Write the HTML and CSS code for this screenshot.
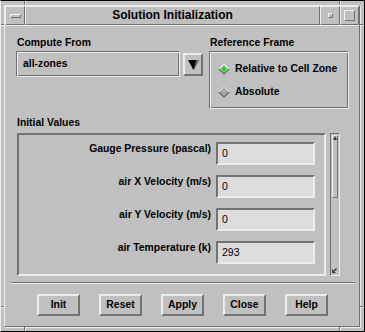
FILE: index.html
```html
<!DOCTYPE html>
<html>
<head>
<meta charset="utf-8">
<title>Solution Initialization</title>
<link rel="stylesheet" href="styles.css">
</head>
<body>
<div class="window">
  <div class="frame">
    <div class="titlebar">
      <div class="tb menu"><span class="menu-glyph"></span></div>
      <div class="tb tb-title">Solution Initialization</div>
      <div class="tb min"><span class="min-glyph"></span></div>
      <div class="tb max"><span class="max-glyph"></span></div>
    </div>
    <div class="client">
      <div class="top-row">
        <div class="col-left">
          <div class="label">Compute From</div>
          <div class="option-row">
            <div class="option-field">all-zones</div>
            <div class="drop-btn">
              <svg width="11" height="10" viewBox="0 0 11 10">
                <polygon points="0,0 11,0 5.5,10" fill="#000"/>
                <polygon points="8,0 11,0 6,9" fill="#6a6a6a"/>
              </svg>
            </div>
          </div>
        </div>
        <div class="col-right">
          <div class="label">Reference Frame</div>
          <div class="radio-box">
            <div class="radio">
              <svg width="12" height="12" viewBox="0 0 12 12">
                <polygon points="6,0 12,6 6,12 0,6" fill="#6e6e6e"/>
                <polygon points="0,6 6,0 12,6 10,6 6,2 2,6" fill="#f4f4f4"/>
                <polygon points="6,2 10,6 6,10 2,6" fill="#c0c0c0"/>
                <polygon points="6,3.3 8.7,6 6,8.7 3.3,6" fill="#00e600"/>
              </svg>
              <span>Relative to Cell Zone</span>
            </div>
            <div class="radio">
              <svg width="12" height="12" viewBox="0 0 12 12">
                <polygon points="6,0 12,6 6,12 0,6" fill="#6e6e6e"/>
                <polygon points="0,6 6,0 12,6 10,6 6,2 2,6" fill="#e4e4e4"/>
                <polygon points="6,2 10,6 6,10 2,6" fill="#a8a8a8"/>
              </svg>
              <span>Absolute</span>
            </div>
          </div>
        </div>
      </div>
      <div class="label iv-label">Initial Values</div>
      <div class="values-row">
        <div class="values-panel">
          <div class="row-label">Gauge Pressure (pascal)</div>
          <div class="entry">0</div>
          <div class="row-label">air X Velocity (m/s)</div>
          <div class="entry">0</div>
          <div class="row-label">air Y Velocity (m/s)</div>
          <div class="entry">0</div>
          <div class="row-label">air Temperature (k)</div>
          <div class="entry">293</div>
        </div>
        <div class="scrollbar">
          <div class="thumb">
            <svg width="4" height="4" viewBox="0 0 4 4"><polygon points="2,0 4,4 0,4" fill="#333"/></svg>
          </div>
          <svg class="grip" width="5" height="5" viewBox="0 0 5 5"><polyline points="0.5,4.5 4.5,0.5" stroke="#333" stroke-width="1.2" fill="none"/><polyline points="0.5,1.5 0.5,4.5 3.5,4.5" stroke="#333" stroke-width="1" fill="none"/></svg>
        </div>
      </div>
      <div class="separator"></div>
      <div class="buttons">
        <div class="btn">Init</div>
        <div class="btn">Reset</div>
        <div class="btn">Apply</div>
        <div class="btn">Close</div>
        <div class="btn">Help</div>
      </div>
    </div>
  </div>
  <span class="tick v tick-tl"></span>
  <span class="tick v tick-tr"></span>
  <span class="tick h tick-lt"></span>
  <span class="tick h tick-rt"></span>
  <span class="tick h tick-lb"></span>
  <span class="tick h tick-rb"></span>
  <span class="tick v tick-bl"></span>
  <span class="tick v tick-br"></span>
</div>
</body>
</html>
```
FILE: styles.css
```css
* { box-sizing: border-box; }
html, body { margin: 0; padding: 0; background: #c0c0c0; }
body { font-family: "Liberation Sans", Arial, sans-serif; color: #000; }

.window {
  position: relative;
  width: 365px;
  height: 332px;
  background: #c0c0c0;
  border-top: 1px solid #000;
  border-right: 1px solid #000;
  border-bottom: 1px solid #000;
  border-left: 1px solid #ececec;
  padding: 4px 4px 4px 3px;
}

.frame {
  height: 100%;
  display: flex;
  flex-direction: column;
  border: 1px solid;
  border-color: #ececec #727272 #727272 #ececec;
  box-shadow: 1px 1px 0 #ececec;
}

.titlebar { height: 19px; display: flex; }
.tb {
  border: 1px solid;
  border-color: #ececec #727272 #727272 #ececec;
  display: flex;
  align-items: center;
  justify-content: center;
}
.menu { width: 20px; }
.tb-title { flex: 1; font-size: 12px; font-weight: bold; line-height: 17px; white-space: nowrap; }
.min { width: 20px; }
.max { width: 19px; }

.menu-glyph {
  width: 11px; height: 4px;
  border: 1px solid;
  border-color: #f4f4f4 #727272 #727272 #f4f4f4;
}
.min-glyph {
  width: 5px; height: 5px;
  border: 1px solid;
  border-color: #f4f4f4 #727272 #727272 #f4f4f4;
}
.max-glyph {
  width: 11px; height: 11px;
  border: 1px solid;
  border-color: #f4f4f4 #727272 #727272 #f4f4f4;
}

.client {
  flex: 1;
  border-top: 1px solid #ececec;
  padding: 10px 10px 0 11px;
  display: flex;
  flex-direction: column;
}

.label {
  font-size: 10.4px;
  font-weight: bold;
  line-height: 13px;
  height: 13px;
  padding-left: 1px;
  white-space: nowrap;
}

.top-row { display: flex; gap: 6px; align-items: flex-start; }
.col-left { width: 187px; }
.col-right { width: 141px; }

.option-row { display: flex; align-items: flex-start; margin-top: 2px; }
.option-field {
  width: 164px;
  height: 26px;
  border: 1px solid;
  border-color: #727272 #ececec #ececec #727272;
  box-shadow: inset 1px 1px 0 #ececec, inset -1px -1px 0 #727272;
  padding-left: 6px;
  font-size: 10.4px;
  font-weight: bold;
  line-height: 24px;
}
.drop-btn {
  width: 20px;
  height: 23px;
  margin-left: 3px;
  margin-top: 2px;
  border: 2px solid;
  border-color: #ececec #727272 #727272 #ececec;
  display: flex;
  justify-content: center;
  align-items: flex-start;
  padding-top: 5px;
}
.drop-btn svg { display: block; }

.radio-box {
  margin-top: 2px;
  height: 58px;
  border: 1px solid;
  border-color: #727272 #ececec #ececec #727272;
  box-shadow: inset 1px 1px 0 #ececec, inset -1px -1px 0 #727272;
  padding: 9px 0 0 8px;
  display: flex;
  flex-direction: column;
  gap: 7px;
}
.radio {
  height: 16px;
  display: flex;
  align-items: center;
  gap: 5px;
  font-size: 10.4px;
  font-weight: bold;
  line-height: 16px;
  white-space: nowrap;
}
.radio svg { display: block; flex: none; }

.iv-label { margin-top: 7px; }

.values-row { display: flex; margin-top: 4px; height: 143px; padding-left: 1px; }
.values-panel {
  width: 309px;
  height: 143px;
  border: 2px solid;
  border-color: #727272 #ececec #ececec #727272;
  padding: 7px 9px 0 0;
  display: grid;
  grid-template-columns: 1fr 99px;
  column-gap: 5px;
  row-gap: 10px;
  align-content: start;
  align-items: start;
}
.row-label {
  text-align: right;
  font-size: 10.4px;
  font-weight: bold;
  line-height: 13px;
  white-space: nowrap;
}
.entry {
  height: 23px;
  border: 2px solid;
  border-color: #727272 #ececec #ececec #727272;
  background: #dcdcdc;
  padding-left: 4px;
  font-size: 10.5px;
  line-height: 19px;
}

.scrollbar {
  position: relative;
  margin-left: 4px;
  width: 10px;
  height: 143px;
  border: 1px solid;
  border-color: #727272 #ececec #ececec #727272;
  padding: 1px;
}
.thumb {
  width: 6px;
  height: 63px;
  border: 1px solid;
  border-color: #ececec #727272 #727272 #ececec;
  display: flex;
  justify-content: center;
  align-items: flex-start;
}
.thumb svg { display: block; }
.grip { position: absolute; left: 1px; bottom: 2px; display: block; }

.separator {
  margin: 6px -6px 0 -5px;
  height: 2px;
  border-top: 1px solid #727272;
  border-bottom: 1px solid #ececec;
}

.buttons { margin-top: 10px; display: flex; justify-content: center; gap: 19px; }
.btn {
  width: 43px;
  height: 22px;
  border: 2px solid;
  border-color: #ececec #727272 #727272 #ececec;
  font-size: 10.4px;
  font-weight: bold;
  line-height: 18px;
  text-align: center;
}

.tick { position: absolute; display: block; }
.tick.v { width: 2px; border-left: 1px solid #727272; border-right: 1px solid #ececec; }
.tick.h { height: 2px; border-top: 1px solid #727272; border-bottom: 1px solid #ececec; }
.tick-tl { left: 23px; top: 0; height: 4px; }
.tick-tr { left: 338px; top: 0; height: 4px; }
.tick-lt { left: 0; top: 23px; width: 3px; }
.tick-rt { left: 359px; top: 23px; width: 4px; }
.tick-lb { left: 0; top: 305px; width: 3px; }
.tick-rb { left: 359px; top: 305px; width: 4px; }
.tick-bl { left: 23px; top: 326px; height: 4px; }
.tick-br { left: 338px; top: 326px; height: 4px; }
```
